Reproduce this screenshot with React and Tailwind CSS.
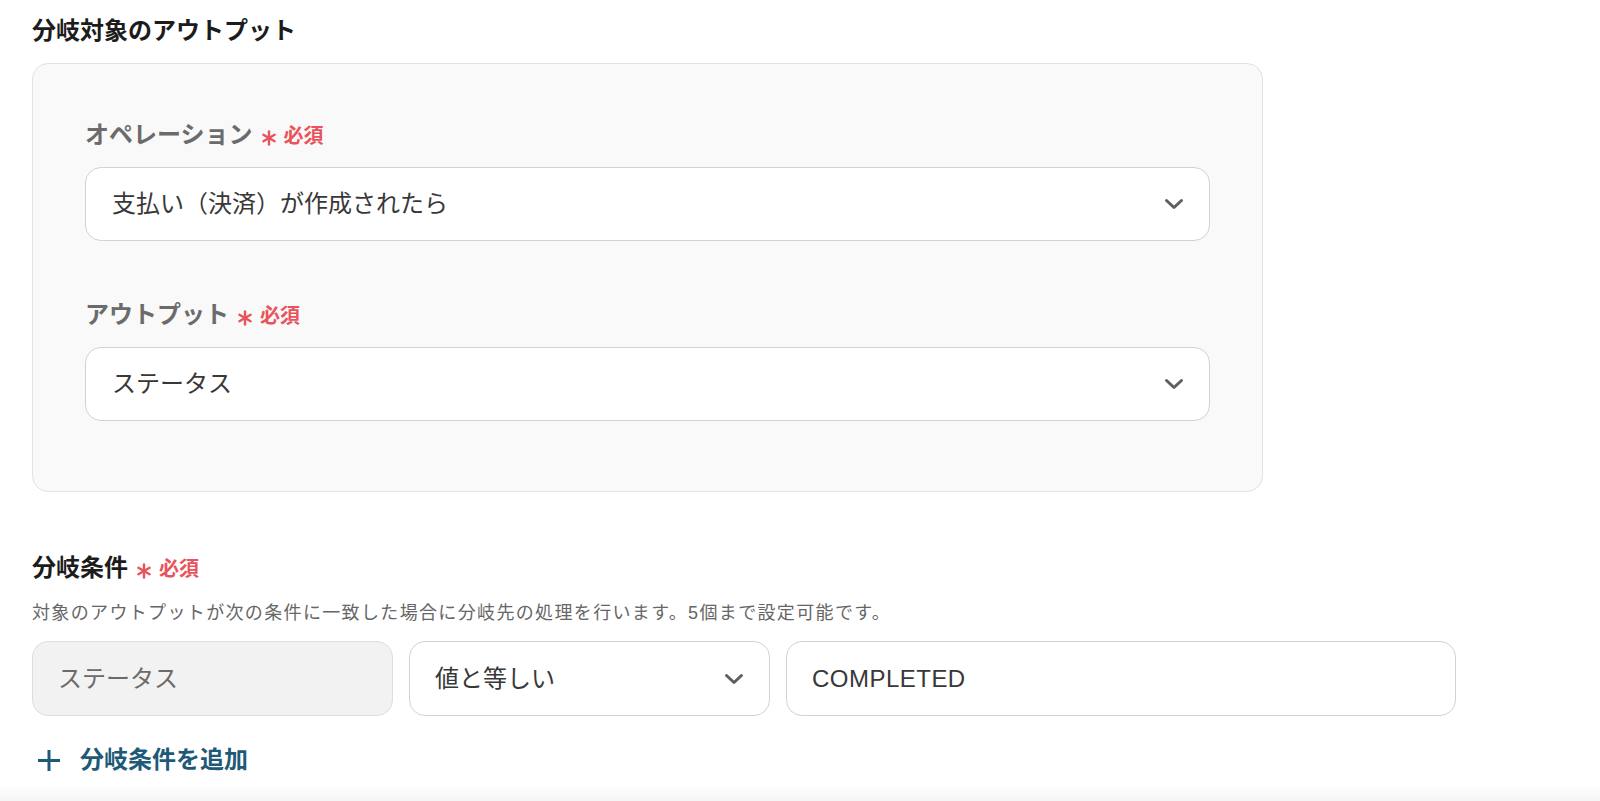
const font = { fontFamily: '"Liberation Sans", "Noto Sans CJK JP", sans-serif' };

function Chevron() {
    return (
        <svg width="20" height="12" viewBox="0 0 20 12" aria-hidden="true">
            <polyline
                points="2.5,2.5 10,9.5 17.5,2.5"
                fill="none"
                stroke="#5f5f5f"
                strokeWidth="3"
                strokeLinecap="round"
                strokeLinejoin="round"
            />
        </svg>
    );
}

function Asterisk() {
    return (
        <svg width="16" height="16" viewBox="0 0 16 16" className="translate-y-[3px]" aria-hidden="true">
            <g stroke="#e9535c" strokeWidth="2.4" strokeLinecap="round">
                <line x1="8" y1="1.5" x2="8" y2="14.5" />
                <line x1="2.4" y1="4.75" x2="13.6" y2="11.25" />
                <line x1="2.4" y1="11.25" x2="13.6" y2="4.75" />
            </g>
        </svg>
    );
}

function Required() {
    return (
        <>
            <span className="ml-[8px] flex items-center">
                <Asterisk />
            </span>
            <span className="ml-[7px] text-[20px] leading-8 font-bold text-[#e9535c] translate-y-[1px]">必須</span>
        </>
    );
}

function Label({ children, className = "" }) {
    return (
        <div className={`flex items-center h-8 ${className}`}>
            <span className="text-[24px] leading-8 font-bold text-[#6b6b6b]">{children}</span>
            <Required />
        </div>
    );
}

function Select({ value, className = "" }) {
    return (
        <div
            className={`flex items-center justify-between h-[74px] rounded-2xl border border-[#cdd3da] bg-white pl-[26px] pr-[25px] ${className}`}
        >
            <span className="text-[24px] text-[#383838]">{value}</span>
            <Chevron />
        </div>
    );
}

export default function App() {
    return (
        <div style={font} className="bg-white min-h-[801px] flex flex-col">
            <div className="flex-1 pl-[32px] pt-[15px]">
                {/* Target output */}
                <h2 className="h-8 flex items-center text-[24px] font-bold text-[#1c1c1c]">
                    分岐対象のアウトプット
                </h2>

                <div className="mt-4 w-[1231px] rounded-2xl border border-[#e2e2e2] bg-[#f9f9f9] px-[52px] pt-[55px] pb-[70px]">
                    <Label>オペレーション</Label>
                    <Select value="支払い（決済）が作成されたら" className="mt-4" />

                    <Label className="mt-[58px]">アウトプット</Label>
                    <Select value="ステータス" className="mt-4" />
                </div>

                {/* Conditions */}
                <div className="mt-[60px] flex items-center h-8">
                    <span className="text-[24px] leading-8 font-bold text-[#1c1c1c]">分岐条件</span>
                    <Required />
                </div>
                <p className="mt-4 h-[26px] flex items-center text-[18px] tracking-[0.075em] text-[#666]">
                    対象のアウトプットが次の条件に一致した場合に分岐先の処理を行います。5個まで設定可能です。
                </p>

                <div className="mt-[15px] flex gap-4">
                    <div className="w-[361px] h-[75px] rounded-2xl border border-[#dedede] bg-[#f2f2f2] flex items-center pl-[25px]">
                        <span className="text-[24px] text-[#6b6b6b]">ステータス</span>
                    </div>
                    <div className="w-[361px] h-[75px] rounded-2xl border border-[#cdd3da] bg-white flex items-center justify-between pl-[25px] pr-[25px]">
                        <span className="text-[24px] text-[#383838]">値と等しい</span>
                        <Chevron />
                    </div>
                    <div className="w-[670px] h-[75px] rounded-2xl border border-[#cdd3da] bg-white flex items-center pl-[25px]">
                        <span className="text-[24px] tracking-[0.02em] text-[#383838]">COMPLETED</span>
                    </div>
                </div>

                <button className="mt-[28px] h-8 flex items-center gap-[20px] pl-[6px] text-[#1e5a78]">
                    <svg width="22" height="21" viewBox="0 0 22 21" aria-hidden="true">
                        <g stroke="currentColor" strokeWidth="3">
                            <line x1="11" y1="0" x2="11" y2="21" />
                            <line x1="0" y1="10.5" x2="22" y2="10.5" />
                        </g>
                    </svg>
                    <span className="text-[24px] font-bold">分岐条件を追加</span>
                </button>
            </div>
            <div className="h-[16px] bg-linear-to-b from-white to-[#f5f5f5]" />
        </div>
    );
}
